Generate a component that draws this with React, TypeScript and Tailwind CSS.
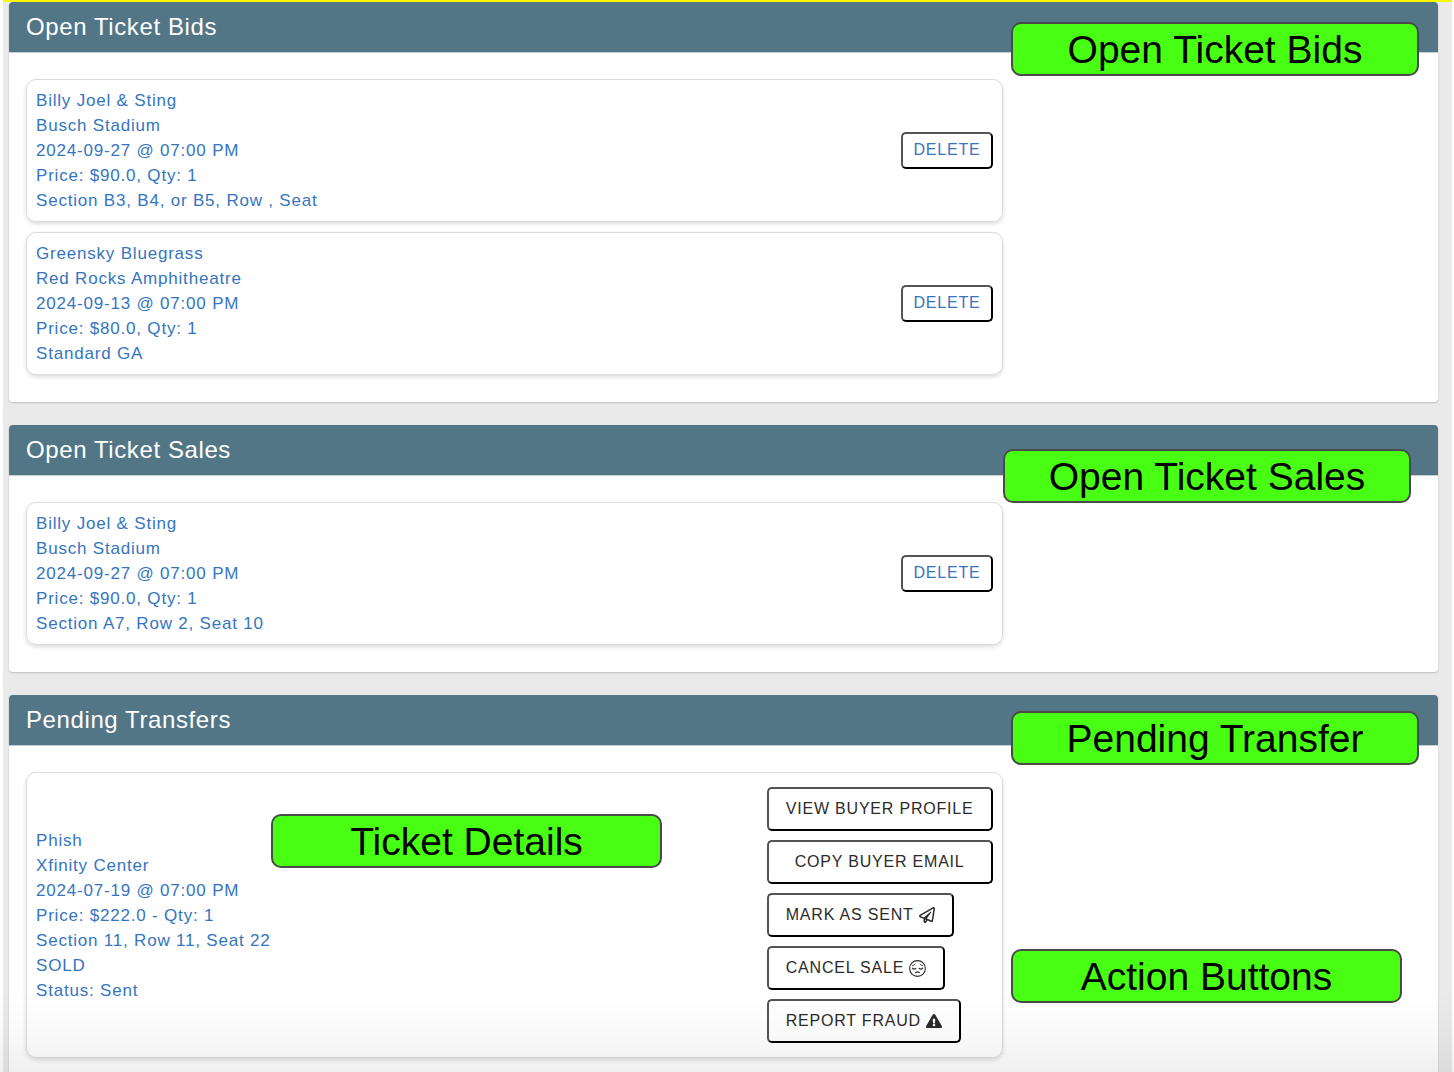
import type { ReactNode } from "react"
import { FaExclamationTriangle, FaRegPaperPlane } from "react-icons/fa"

const bids = [
  {
    id: "bid-1",
    lines: [
      "Billy Joel & Sting",
      "Busch Stadium",
      "2024-09-27 @ 07:00 PM",
      "Price: $90.0, Qty: 1",
      "Section B3, B4, or B5, Row , Seat",
    ],
  },
  {
    id: "bid-2",
    lines: [
      "Greensky Bluegrass",
      "Red Rocks Amphitheatre",
      "2024-09-13 @ 07:00 PM",
      "Price: $80.0, Qty: 1",
      "Standard GA",
    ],
  },
]

const sales = [
  {
    id: "sale-1",
    lines: [
      "Billy Joel & Sting",
      "Busch Stadium",
      "2024-09-27 @ 07:00 PM",
      "Price: $90.0, Qty: 1",
      "Section A7, Row 2, Seat 10",
    ],
  },
]

const transfer = [
  "Phish",
  "Xfinity Center",
  "2024-07-19 @ 07:00 PM",
  "Price: $222.0 - Qty: 1",
  "Section 11, Row 11, Seat 22",
  "SOLD",
  "Status: Sent",
]

function PensiveFace() {
  return (
    <svg viewBox="0 0 16 16" className="size-[17px]" fill="none" stroke="currentColor" strokeLinecap="round" aria-hidden="true">
      <circle cx="8" cy="8" r="7.4" strokeWidth="1" />
      <path d="M3.2 7.7c.6 1 2.4 1.1 3.2.2M9.6 7.9c.8.9 2.6.8 3.2-.2" strokeWidth="1.2" />
      <path d="M3.3 5.3c.9-.2 1.8-.7 2.3-1.5M12.7 5.3c-.9-.2-1.8-.7-2.3-1.5" strokeWidth=".9" />
      <path d="M6.3 11.8c.9-.6 2.5-.6 3.4 0" strokeWidth="1.2" />
    </svg>
  )
}

function Callout({ className, children }: { className: string; children: ReactNode }) {
  return (
    <div
      className={`absolute z-10 flex h-[54px] items-center justify-center rounded-[10px] border-2 border-[#4a4a4a] bg-[#48ff14] text-[39px] leading-none tracking-normal text-black ${className}`}
    >
      {children}
    </div>
  )
}

function Panel({ title, className, children }: { title: string; className: string; children: ReactNode }) {
  return (
    <section className={`relative bg-white shadow-[0_1px_2px_rgba(0,0,0,0.2)] ${className}`}>
      <h2 className="rounded-t border-b border-[#c3cfd5] bg-[#537686] px-[17px] text-2xl leading-[50px] font-normal tracking-wide text-white">
        {title}
      </h2>
      <div className="flex flex-col gap-2.5 px-[17px] pt-[26px]">{children}</div>
    </section>
  )
}

function Card({ className, children }: { className: string; children: ReactNode }) {
  return (
    <article
      className={`relative flex w-[70%] items-center justify-between rounded-[10px] border border-[#dcdcdc] px-[9px] shadow-[0_2px_4px_rgba(0,0,0,0.14)] ${className}`}
    >
      {children}
    </article>
  )
}

function Details({ lines }: { lines: string[] }) {
  return (
    <a href="#" className="text-[17px] leading-[25px] text-[#3575c0]">
      {lines.map((line) => (
        <span key={line} className="block">
          {line}
        </span>
      ))}
    </a>
  )
}

function TicketCard({ lines }: { lines: string[] }) {
  return (
    <Card className="py-2">
      <Details lines={lines} />
      <button
        type="button"
        className="h-[37px] rounded-[5px] border-2 border-black bg-white px-2.5 pb-0.5 text-base leading-6 text-[#3575c0] [border-style:outset]"
      >
        DELETE
      </button>
    </Card>
  )
}

function ActionButton({ className = "", children }: { className?: string; children: ReactNode }) {
  return (
    <button
      type="button"
      className={`flex h-11 items-center justify-center gap-[5px] rounded-[5px] border-2 border-black px-[17px] text-base leading-6 text-[#2b2b2b] [border-style:outset] ${className}`}
    >
      {children}
    </button>
  )
}

export default function App() {
  return (
    <div className="min-h-screen bg-white pr-0.5 pl-[3px] font-['Liberation_Sans',Arial,sans-serif] tracking-wider">
      <main className="flex min-h-screen flex-col gap-[23px] border-t-2 border-[#f8f800] bg-[#eaeaea] pr-3.5 pl-1.5">
        <Panel title="Open Ticket Bids" className="rounded pb-[27px]">
          {bids.map((bid) => (
            <TicketCard key={bid.id} lines={bid.lines} />
          ))}
          <Callout className="top-5 right-[19px] w-[408px]">Open Ticket Bids</Callout>
        </Panel>

        <Panel title="Open Ticket Sales" className="rounded pb-[27px]">
          {sales.map((sale) => (
            <TicketCard key={sale.id} lines={sale.lines} />
          ))}
          <Callout className="top-6 right-[27px] w-[408px]">Open Ticket Sales</Callout>
        </Panel>

        <Panel title="Pending Transfers" className="flex-1 rounded-t pb-3.5">
          <Card className="py-3.5">
            <Details lines={transfer} />
            <div className="flex flex-col items-start gap-[9px]">
              <ActionButton className="w-full">VIEW BUYER PROFILE</ActionButton>
              <ActionButton className="w-full">COPY BUYER EMAIL</ActionButton>
              <ActionButton>
                MARK AS SENT <FaRegPaperPlane aria-hidden="true" />
              </ActionButton>
              <ActionButton>
                CANCEL SALE <PensiveFace />
              </ActionButton>
              <ActionButton>
                REPORT FRAUD <FaExclamationTriangle aria-hidden="true" />
              </ActionButton>
            </div>
            <Callout className="top-[41px] left-[244px] w-[391px]">Ticket Details</Callout>
          </Card>
          <Callout className="top-4 right-[19px] w-[408px]">Pending Transfer</Callout>
          <Callout className="top-[254px] right-9 w-[391px]">Action Buttons</Callout>
        </Panel>
      </main>
      <div className="pointer-events-none fixed inset-x-0 bottom-0 h-20 bg-linear-to-b from-transparent via-black/2 to-black/6" />
    </div>
  )
}
